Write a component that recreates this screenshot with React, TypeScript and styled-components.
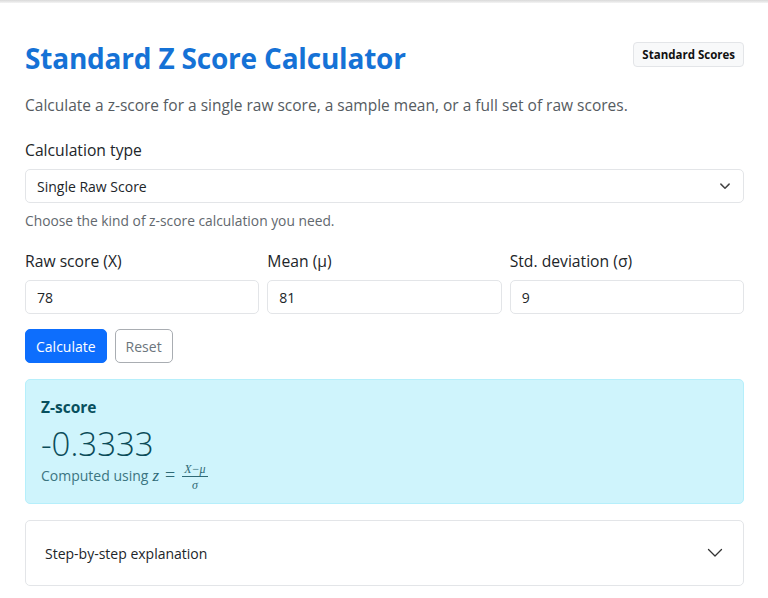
import React from "react";
import styled, { createGlobalStyle } from "styled-components";

const Global = createGlobalStyle`
  html, body { margin: 0; padding: 0; background: #fff; }
  body { font-family: "Open Sans", "Noto Sans", sans-serif; color: #212529; }
  * { box-sizing: border-box; }
`;

const TopEdge = styled.div`
  height: 3px;
  background: linear-gradient(#d9d9d9, #f4f4f4);
`;

const Page = styled.main`
  padding: 37px 24px 0 25px;
`;

const Header = styled.header`
  display: flex;
  justify-content: space-between;
  align-items: flex-start;
`;

const Title = styled.h1`
  margin: 0;
  font-size: 28px;
  line-height: 37px;
  font-weight: 700;
  color: #1572d6;
  letter-spacing: -0.2px;
`;

const Badge = styled.span`
  margin-top: 2px;
  padding: 3px 8px;
  font-size: 11.5px;
  line-height: 17px;
  font-weight: 700;
  color: #111;
  background: #f8f9fa;
  border: 1px solid #e3e5e8;
  border-radius: 4px;
`;

const Lead = styled.p`
  margin: 16px 0 0;
  font-size: 15.5px;
  line-height: 24px;
  color: #555b61;
`;

const Field = styled.div`
  display: flex;
  flex-direction: column;
`;

const Label = styled.label`
  font-size: 15.7px;
  line-height: 24px;
  color: #212529;
  margin-bottom: 7px;
`;

const Section = styled.div<{ $top: number }>`
  margin-top: ${(p) => p.$top}px;
`;

const SelectBox = styled.div`
  display: flex;
  align-items: center;
  justify-content: space-between;
  height: 34px;
  padding: 0 12px 0 11px;
  border: 1px solid #e3e5e8;
  border-radius: 5px;
  font-size: 14px;
  color: #212529;
  background: #fff;
`;

const Help = styled.div`
  margin-top: 7px;
  font-size: 13.8px;
  line-height: 21px;
  color: #62686e;
`;

const Grid = styled.div`
  display: grid;
  grid-template-columns: repeat(3, 1fr);
  column-gap: 8px;
`;

const Input = styled.div`
  height: 34px;
  display: flex;
  align-items: center;
  padding: 0 12px 0 11px;
  border: 1px solid #e3e5e8;
  border-radius: 5px;
  font-size: 14px;
  color: #212529;
`;

const Buttons = styled.div`
  display: flex;
  gap: 8px;
  margin-top: 15px;
`;

const Button = styled.button<{ $primary?: boolean }>`
  height: 34px;
  padding: 0 10px;
  font-family: inherit;
  font-size: 14px;
  border-radius: 5px;
  border: 1px solid ${(p) => (p.$primary ? "#0d6efd" : "#a9adb2")};
  background: ${(p) => (p.$primary ? "#0d6efd" : "#fff")};
  color: ${(p) => (p.$primary ? "#fff" : "#6c757d")};
`;

const Result = styled.section`
  margin-top: 16px;
  height: 125px;
  padding: 15px 15px 0;
  background: #cff4fc;
  border: 1px solid #b6effb;
  border-radius: 5px;
  color: #055160;
`;

const ResultTitle = styled.div`
  font-size: 15.5px;
  line-height: 24px;
  font-weight: 700;
  color: #074f5d;
`;

const Value = styled.div`
  font-size: 33px;
  line-height: 38px;
  font-weight: 300;
  color: #0b4c59;
  margin-top: 6px;
`;

const Note = styled.div`
  display: flex;
  align-items: center;
  gap: 4px;
  margin-top: -3px;
  font-size: 14px;
  line-height: 21px;
  color: #3b7581;
`;

const MathVar = styled.span`
  font-family: "Liberation Serif", "DejaVu Serif", serif;
  font-style: italic;
  font-size: 17px;
  color: #2f6a76;
`;

const MathOp = styled.span`
  font-family: "Liberation Serif", "DejaVu Serif", serif;
  font-size: 18px;
  color: #2f6a76;
  margin: 0 3px 0 2px;
`;

const Frac = styled.span`
  display: inline-flex;
  flex-direction: column;
  align-items: center;
  font-family: "Liberation Serif", "DejaVu Serif", serif;
  font-style: italic;
  font-size: 12px;
  line-height: 12px;
  color: #2f6a76;
  margin-top: 3px;
`;

const Num = styled.span`
  padding: 0 2px 1px;
  border-bottom: 1px solid #2f6a76;
`;

const Den = styled.span`
  padding-top: 2px;
`;

const Accordion = styled.section`
  margin-top: 16px;
  height: 66px;
  display: flex;
  align-items: center;
  justify-content: space-between;
  padding: 0 20px 0 19px;
  border: 1px solid #e3e5e8;
  border-radius: 5px;
  font-size: 14px;
  color: #212529;
`;

const SmallChevron = () => (
  <svg width="12" height="12" viewBox="0 0 16 16" fill="none">
    <path d="M2.5 5.5 8 11l5.5-5.5" stroke="#444" strokeWidth="2" strokeLinecap="round" strokeLinejoin="round" />
  </svg>
);

const BigChevron = () => (
  <svg width="16" height="16" viewBox="0 0 16 16" fill="none">
    <path d="M1.5 4.5 8 11l6.5-6.5" stroke="#333" strokeWidth="1.3" strokeLinecap="round" strokeLinejoin="round" />
  </svg>
);

export default function App() {
  return (
    <>
      <Global />
      <TopEdge />
      <Page>
        <Header>
          <Title>Standard Z Score Calculator</Title>
          <Badge>Standard Scores</Badge>
        </Header>
        <Lead>Calculate a z-score for a single raw score, a sample mean, or a full set of raw scores.</Lead>

        <Section $top={21}>
          <Field>
            <Label>Calculation type</Label>
            <SelectBox>
              <span>Single Raw Score</span>
              <SmallChevron />
            </SelectBox>
          </Field>
          <Help>Choose the kind of z-score calculation you need.</Help>
        </Section>

        <Section $top={18}>
          <Grid>
            <Field>
              <Label>Raw score (X)</Label>
              <Input>78</Input>
            </Field>
            <Field>
              <Label>Mean (μ)</Label>
              <Input>81</Input>
            </Field>
            <Field>
              <Label>Std. deviation (σ)</Label>
              <Input>9</Input>
            </Field>
          </Grid>
        </Section>

        <Buttons>
          <Button $primary>Calculate</Button>
          <Button>Reset</Button>
        </Buttons>

        <Result>
          <ResultTitle>Z-score</ResultTitle>
          <Value>-0.3333</Value>
          <Note>
            <span>Computed using</span>
            <MathVar>z</MathVar>
            <MathOp>=</MathOp>
            <Frac>
              <Num>X−μ</Num>
              <Den>σ</Den>
            </Frac>
          </Note>
        </Result>

        <Accordion>
          <span>Step-by-step explanation</span>
          <BigChevron />
        </Accordion>
      </Page>
    </>
  );
}
